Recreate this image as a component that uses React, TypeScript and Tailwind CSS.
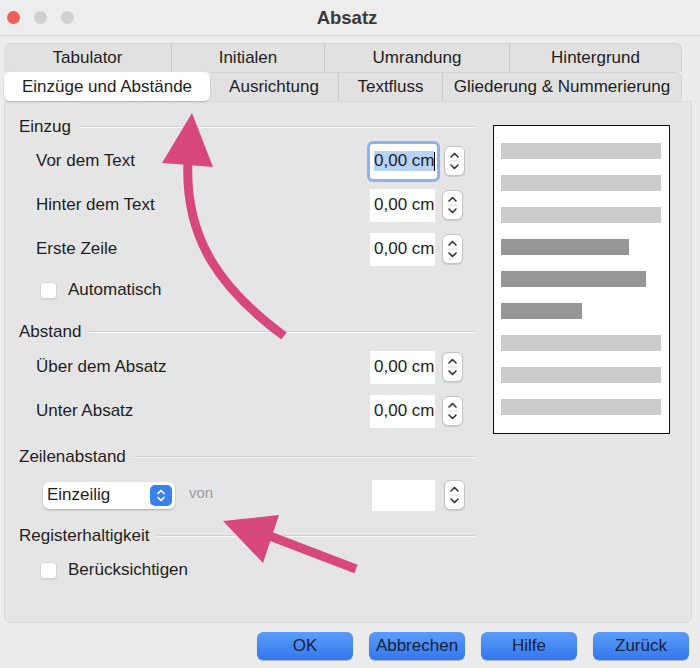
import React from 'react'

const font = { fontFamily: '"Liberation Sans", Arial, sans-serif' }

const Stepper = () => (
  <div className="w-[21px] h-[30px] bg-white rounded-[6px] border border-[#c4c4c4] shadow-[0_1px_1px_rgba(0,0,0,0.12)] flex flex-col items-center justify-center">
    <svg width="11" height="24" viewBox="0 0 11 24" fill="none" stroke="#333" strokeWidth="1.6" strokeLinecap="round" strokeLinejoin="round">
      <path d="M2 8 L5.5 4.5 L9 8" />
      <line x1="0" y1="12" x2="11" y2="12" stroke="#dcdcdc" strokeWidth="1" />
      <path d="M2 16 L5.5 19.5 L9 16" />
    </svg>
  </div>
)

const SectionHeader = ({ label, className = '' }: { label: string; className?: string }) => (
  <div className={`flex items-center pl-[14px] pr-[5px] ${className}`}>
    <span className="text-[17px] text-[#1e1e1e]">{label}</span>
    <div className="flex-1 ml-[8px] h-[2px] border-t border-[#d2d2d2] bg-[#f6f6f6]" />
  </div>
)

const FieldRow = ({ label, focused = false }: { label: string; focused?: boolean }) => (
  <div className="h-[44px] flex items-center">
    <span className="w-[365px] pl-[31px] text-[17px] text-[#1e1e1e]">{label}</span>
    {focused ? (
      <div className="w-[67px] h-[35px] bg-white rounded-[3px] ring-[3px] ring-[#8fb2ec] flex items-center pl-[4px] text-[17px] text-[#1e1e1e]">
        <span className="bg-[#b9d3f6] leading-[20px]">0,00 cm</span>
        <span className="w-[1px] h-[19px] bg-black" />
      </div>
    ) : (
      <div className="w-[65px] h-[33px] bg-white flex items-center pl-[4px] text-[17px] text-[#1e1e1e]">0,00 cm</div>
    )}
    <div className="ml-[7px]">
      <Stepper />
    </div>
  </div>
)

const Checkbox = ({ label }: { label: string }) => (
  <div className="flex items-center pl-[35px]">
    <div className="w-[17px] h-[17px] bg-white rounded-[4px] border border-[#d6d6d6] shadow-[0_1px_1px_rgba(0,0,0,0.08)]" />
    <span className="ml-[11px] text-[17px] text-[#1e1e1e]">{label}</span>
  </div>
)

const tabsTop = [
  { label: 'Tabulator', w: 167 },
  { label: 'Initialen', w: 153 },
  { label: 'Umrandung', w: 185 },
  { label: 'Hintergrund', w: 173 },
]

const tabsBottom = [
  { label: 'Einzüge und Abstände', w: 206, active: true },
  { label: 'Ausrichtung', w: 128 },
  { label: 'Textfluss', w: 104 },
  { label: 'Gliederung & Nummerierung', w: 240 },
]

const bars = [
  { w: 160, dark: false },
  { w: 160, dark: false },
  { w: 160, dark: false },
  { w: 128, dark: true },
  { w: 145, dark: true },
  { w: 81, dark: true },
  { w: 160, dark: false },
  { w: 160, dark: false },
  { w: 160, dark: false },
]

export default function App() {
  return (
    <div style={font} className="relative w-[700px] h-[668px] bg-[#ececec] overflow-hidden">
      {/* title bar */}
      <div className="relative h-[36px] flex items-center border-b border-[#d6d6d6] bg-[#ededed]">
        <div className="flex items-center gap-[14px] pl-[7px]">
          <div className="w-[13px] h-[13px] rounded-full bg-[#ed5f58]" />
          <div className="w-[13px] h-[13px] rounded-full bg-[#d0d0d0]" />
          <div className="w-[13px] h-[13px] rounded-full bg-[#d0d0d0]" />
        </div>
        <div className="absolute inset-0 flex items-center justify-center font-bold text-[18.5px] text-[#3a3a3a] -ml-[6px]">Absatz</div>
      </div>

      {/* tabs */}
      <div className="pl-[4px] pt-[7px]">
        <div className="flex h-[29px]">
          {tabsTop.map((t, i) => (
            <div
              key={t.label}
              style={{ width: t.w }}
              className={`flex items-center justify-center bg-[#e1e1e1] border-t border-[#d4d4d4] text-[17px] text-[#1e1e1e] ${i > 0 ? 'border-l border-l-[#c9c9c9]' : 'rounded-tl-[7px]'} ${i === tabsTop.length - 1 ? 'rounded-tr-[7px] border-r border-r-[#d4d4d4]' : ''}`}
            >
              {t.label}
            </div>
          ))}
        </div>
        <div className="flex h-[29px]">
          {tabsBottom.map((t, i) => (
            <div
              key={t.label}
              style={{ width: t.w }}
              className={`flex items-center justify-center text-[17px] text-[#1e1e1e] ${t.active ? 'bg-white rounded-[6px] shadow-[0_1px_2px_rgba(0,0,0,0.2)] z-10' : 'bg-[#e1e1e1] border-t border-[#d2d2d2]'} ${i > 1 ? 'border-l border-l-[#c9c9c9]' : ''} ${i === tabsBottom.length - 1 ? 'rounded-tr-[6px] border-r border-r-[#d4d4d4]' : ''}`}
            >
              {t.label}
            </div>
          ))}
        </div>
      </div>

      {/* panel */}
      <div className="ml-[4px] w-[688px] h-[522px] bg-[#e5e5e5] border border-[#d9d9d9] rounded-b-[7px] flex">
        <div className="w-[476px] flex flex-col pt-[13px]">
          <SectionHeader label="Einzug" className="h-[24px]" />
          <FieldRow label="Vor dem Text" focused />
          <FieldRow label="Hinter dem Text" />
          <FieldRow label="Erste Zeile" />
          <div className="h-[38px] flex items-center">
            <Checkbox label="Automatisch" />
          </div>
          <SectionHeader label="Abstand" className="h-[36px] pt-[10px]" />
          <FieldRow label="Über dem Absatz" />
          <FieldRow label="Unter Absatz" />
          <SectionHeader label="Zeilenabstand" className="h-[48px]" />
          <div className="h-[28px] flex items-center">
            <div className="ml-[38px] w-[132px] h-[27px] bg-white rounded-[6px] shadow-[0_1px_2px_rgba(0,0,0,0.25)] flex items-center justify-between pl-[4px] pr-[3px]">
              <span className="text-[17px] text-[#1e1e1e]">Einzeilig</span>
              <div className="w-[22px] h-[21px] rounded-[5px] bg-[#3a80f1] flex items-center justify-center">
                <svg width="10" height="15" viewBox="0 0 10 15" fill="none" stroke="white" strokeWidth="1.7" strokeLinecap="round" strokeLinejoin="round">
                  <path d="M2 5.5 L5 2.5 L8 5.5" />
                  <path d="M2 9.5 L5 12.5 L8 9.5" />
                </svg>
              </div>
            </div>
            <span className="ml-[14px] w-[183px] text-[15px] text-[#9c9c9c] -mt-[4px]">von</span>
            <div className="w-[63px] h-[31px] bg-white" />
            <div className="ml-[9px]">
              <Stepper />
            </div>
          </div>
          <SectionHeader label="Registerhaltigkeit" className="h-[32px] mt-[11px]" />
          <div className="h-[36px] flex items-center">
            <Checkbox label="Berücksichtigen" />
          </div>
        </div>

        {/* preview */}
        <div className="ml-[12px] mt-[23px] w-[177px] h-[309px] bg-white border border-[#111] flex flex-col gap-[16px] pt-[17px] pl-[7px]">
          {bars.map((b, i) => (
            <div
              key={i}
              style={{ width: b.w }}
              className={`h-[16px] ${b.dark ? 'bg-[#969696]' : 'bg-[#cbcbcb]'}`}
            />
          ))}
        </div>
      </div>

      {/* buttons */}
      <div className="flex justify-end gap-[16px] pr-[11px] mt-[9px]">
        {['OK', 'Abbrechen', 'Hilfe', 'Zurück'].map((b) => (
          <button
            key={b}
            className="w-[96px] h-[28px] rounded-[6px] bg-gradient-to-b from-[#5b9cf8] to-[#3377ee] shadow-[0_1px_1px_rgba(0,0,0,0.25)] text-[17px] text-[#17223b]"
          >
            {b}
          </button>
        ))}
      </div>

      {/* annotation arrows */}
      <svg className="absolute inset-0 pointer-events-none" width="700" height="668" viewBox="0 0 700 668">
        <path d="M284 336 C 222 290, 184 240, 188 160" fill="none" stroke="#d7497d" strokeWidth="9" />
        <polygon points="192,113 162,163 213,167" fill="#d7497d" />
        <line x1="356" y1="569" x2="262" y2="533" stroke="#d7497d" strokeWidth="9" />
        <polygon points="223,521 279,515 263,563" fill="#d7497d" />
      </svg>
    </div>
  )
}
